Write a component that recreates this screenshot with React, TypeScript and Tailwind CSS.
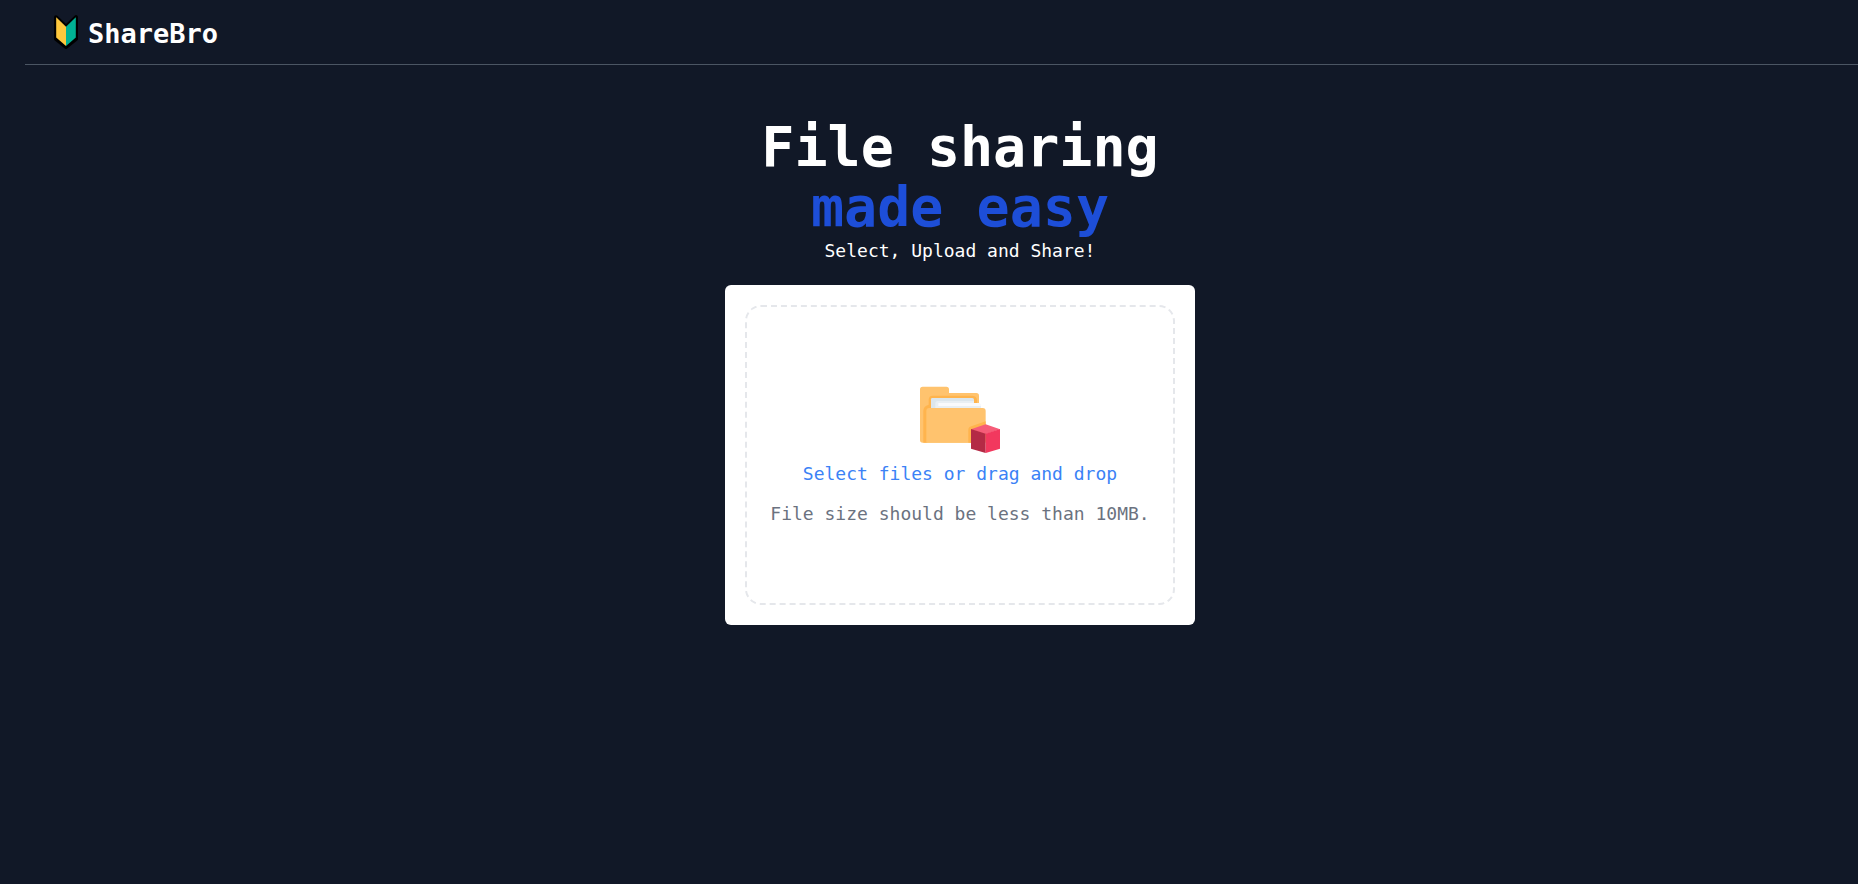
import { useState } from "react";

function Logo() {
  return (
    <svg viewBox="0 0 24 34" className="h-[34px] w-6 shrink-0" aria-hidden="true">
      <path
        d="M2 2.2 L12 11.8 L22 2.2 V24 L12 32 L2 24 Z"
        fill="#000"
        stroke="#000"
        strokeWidth="4"
        strokeLinejoin="round"
      />
      <path d="M2.2 2.2 L12 11.8 V31 L2.2 22.5 Z" fill="#ffc83d" />
      <path d="M21.8 2.2 L12 11.8 V31 L21.8 22.5 Z" fill="#00b294" />
    </svg>
  );
}

function FolderIcon() {
  return (
    <svg viewBox="60 48 240 204" className="h-[68px] w-20" aria-hidden="true">
      <path
        d="M60 58 Q60 50 68 50 H139 Q147 50 147 58 V69 H229 Q237 69 237 77 V99 H230 V218 H68 Q60 218 60 210 Z"
        fill="#ffc36e"
      />
      <path
        d="M70 218 V122 Q70 108 86 104 V90 Q86 77 98 77 H213 Q231 77 231 90 V99 H222 V120 H82 V218 Z"
        fill="#ffb44d"
      />
      <path d="M93 88 Q93 84 97 84 H217 Q222 84 222 89 V118 H93 Z" fill="#dce6ec" />
      <path d="M106 118 V101 Q106 93 114 93 H222 V99 H236 Q243 101 243 109 V118 Z" fill="#e9eff3" />
      <path d="M115 99 H236 Q243 101 243 108 H115 Z" fill="#f9fafc" />
      <path
        d="M79 123 Q79 114 88 114 H248 Q257 114 257 123 V210 Q257 218 249 218 H79 Z"
        fill="#ffc36e"
      />
      <path d="M205 218 V180 Q205 171 214 169 L257 154 V218 Z" fill="#ffb44d" />
      <path d="M257 163 L300 178 L257 193 L213 178 Z" fill="#f65c78" />
      <path d="M213 177 L257 191 V249 L213 236 Z" fill="#b42a45" />
      <path d="M300 177 L257 191 V249 L300 236 Z" fill="#f2385e" />
    </svg>
  );
}

function DropZone() {
  const [fileName, setFileName] = useState("");
  return (
    <div className="w-full max-w-[470px] rounded-md bg-white p-5">
      <label
        htmlFor="file"
        className="flex min-h-[300px] cursor-pointer flex-col items-center justify-center rounded-2xl border-2 border-dashed border-[#e5e7eb] pt-1 text-center text-lg"
      >
        <FolderIcon />
        <span className="mt-1.5 text-[#3b82f6]">{fileName || "Select files or drag and drop"}</span>
        <span className="mt-3 text-[#6b7280]">File size should be less than 10MB.</span>
        <input
          id="file"
          type="file"
          className="sr-only"
          onChange={(e) => setFileName(e.target.files?.[0]?.name ?? "")}
        />
      </label>
    </div>
  );
}

export default function App() {
  return (
    <div className="min-h-screen bg-[#111827] font-['DejaVu_Sans_Mono',monospace] text-white">
      <header className="ml-[25px] flex h-[65px] items-center border-b border-[#4b5563] pl-[29px]">
        <a href="#" className="flex items-center gap-2.5 text-[27px] font-bold">
          <Logo />
          <span className="pt-1">ShareBro</span>
        </a>
      </header>
      <main className="flex flex-col items-center pt-[52px] pl-[62px]">
        <h1 className="text-center text-[55px] leading-[60px] font-bold">
          File sharing
          <br />
          <span className="text-[#1d4ed8]">made easy</span>
        </h1>
        <p className="mb-5 text-lg">Select, Upload and Share!</p>
        <DropZone />
      </main>
    </div>
  );
}
